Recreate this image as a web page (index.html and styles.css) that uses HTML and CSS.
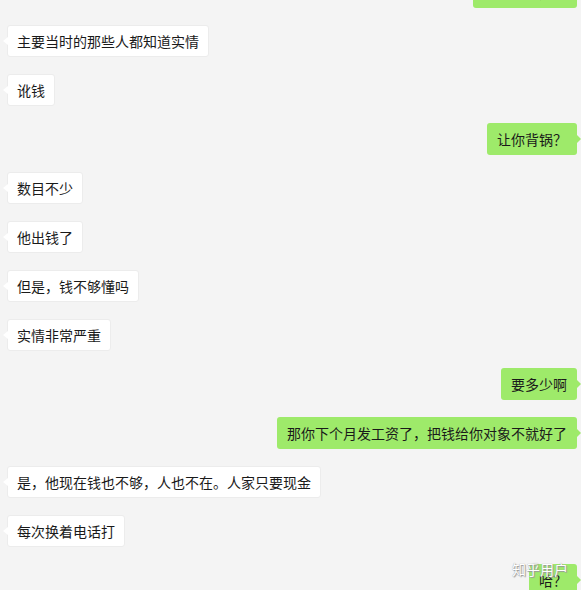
FILE: index.html
```html
<!DOCTYPE html>
<html lang="zh-CN">
<head>
<meta charset="utf-8">
<title>聊天记录</title>
<link rel="stylesheet" href="styles.css">
</head>
<body>
<div class="chat">
  <div class="row me"><div class="bubble">那我怎么办呢</div></div>
  <div class="row other"><div class="bubble">主要当时的那些人都知道实情</div></div>
  <div class="row other"><div class="bubble">讹钱</div></div>
  <div class="row me"><div class="bubble">让你背锅？</div></div>
  <div class="row other"><div class="bubble">数目不少</div></div>
  <div class="row other"><div class="bubble">他出钱了</div></div>
  <div class="row other"><div class="bubble">但是，钱不够懂吗</div></div>
  <div class="row other"><div class="bubble">实情非常严重</div></div>
  <div class="row me"><div class="bubble">要多少啊</div></div>
  <div class="row me"><div class="bubble">那你下个月发工资了，把钱给你对象不就好了</div></div>
  <div class="row other"><div class="bubble">是，他现在钱也不够，人也不在。人家只要现金</div></div>
  <div class="row other"><div class="bubble">每次换着电话打</div></div>
  <div class="row me"><div class="bubble">哈？</div></div>
</div>
<div class="watermark">知乎用户</div>
</body>
</html>
```

FILE: styles.css
```css
html, body {
  margin: 0;
  padding: 0;
  background: #f4f4f4;
  height: 590px;
  overflow: hidden;
}
body {
  position: relative;
  font-family: "Microsoft YaHei", "Noto Sans CJK SC", "Noto Sans", sans-serif;
}
.chat {
  display: flex;
  flex-direction: column;
  gap: 17px;
  margin-top: -24px;
  padding: 0 4px 0 7px;
}
.row {
  display: flex;
}
.row.me {
  justify-content: flex-end;
}
.bubble {
  position: relative;
  box-sizing: border-box;
  height: 32px;
  padding: 7px 10px;
  font-size: 14px;
  line-height: 18px;
  color: #1a1a1a;
  border-radius: 3px;
  white-space: nowrap;
}
.other .bubble {
  background: #ffffff;
  border: 1px solid #ececec;
  padding: 6px 9px;
}
.me .bubble {
  background: #9eea6a;
}
.other .bubble::before {
  content: "";
  position: absolute;
  left: -5px;
  top: 11px;
  border-style: solid;
  border-width: 4px 5px 4px 0;
  border-color: transparent #ffffff transparent transparent;
}
.me .bubble::after {
  content: "";
  position: absolute;
  right: -4px;
  top: 12px;
  border-style: solid;
  border-width: 4px 0 4px 4px;
  border-color: transparent transparent transparent #9eea6a;
}
.watermark {
  position: absolute;
  left: 512px;
  top: 560px;
  font-size: 14px;
  line-height: 18px;
  color: #ffffff;
  text-shadow: 0 0 1px #8a8a8a, 1px 1px 1px #9a9a9a;
  white-space: nowrap;
}
```
